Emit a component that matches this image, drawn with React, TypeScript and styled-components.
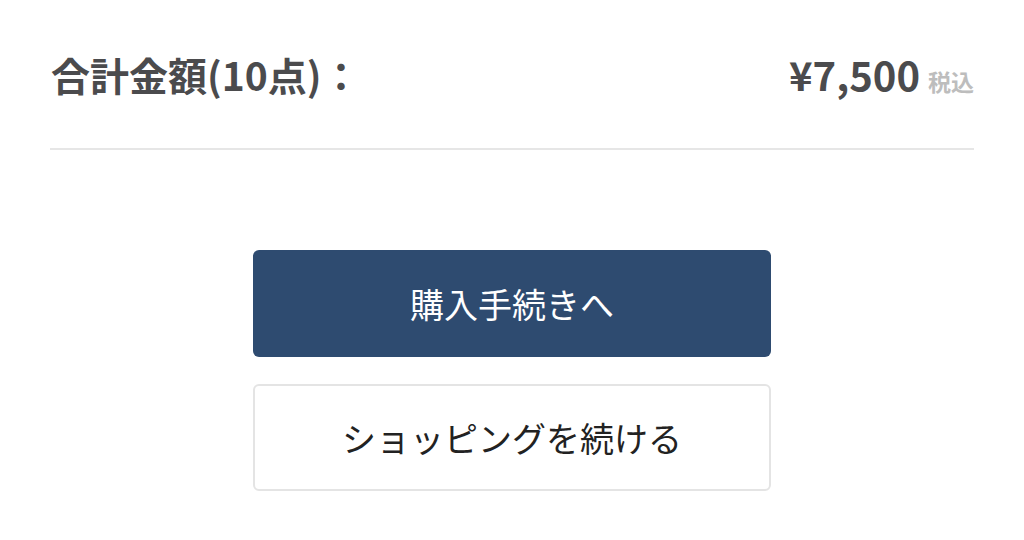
import styled, { createGlobalStyle } from 'styled-components';

const Global = createGlobalStyle`
  html, body {
    margin: 0;
    padding: 0;
    background: #fff;
  }
  body {
    font-family: "Noto Sans CJK JP", "Noto Sans", sans-serif;
  }
`;

const Page = styled.div`
  width: 1024px;
  height: 540px;
  box-sizing: border-box;
  padding: 0 50px;
  display: flex;
  flex-direction: column;
`;

const TotalRow = styled.div`
  display: flex;
  align-items: center;
  justify-content: space-between;
  height: 150px;
  padding: 0 0 0 1px;
  box-sizing: border-box;
  border-bottom: 2px solid #e6e6e6;
`;

const TotalLabel = styled.div`
  font-size: 39px;
  font-weight: 700;
  color: #4b4b4d;
  margin-top: -1px;
`;

const Price = styled.div`
  display: flex;
  align-items: baseline;
  gap: 8px;
  margin-top: -1px;
`;

const Amount = styled.span`
  font-size: 40px;
  font-weight: 700;
  color: #4b4b4d;
`;

const Tax = styled.span`
  font-size: 23px;
  font-weight: 700;
  color: #bdbdbd;
`;

const Actions = styled.div`
  display: flex;
  flex-direction: column;
  align-items: center;
  gap: 27px;
  padding-top: 100px;
`;

const Button = styled.button<{ primary?: boolean }>`
  width: 518px;
  height: 107px;
  box-sizing: border-box;
  border-radius: 6px;
  font-family: "Noto Sans CJK JP", sans-serif;
  font-size: 34px;
  font-weight: 400;
  cursor: pointer;
  background: ${p => (p.primary ? '#2e4b70' : '#fff')};
  color: ${p => (p.primary ? '#fff' : '#222')};
  border: ${p => (p.primary ? 'none' : '2px solid #e4e4e4')};
`;

export default function App() {
  return (
    <>
      <Global />
      <Page>
        <TotalRow>
          <TotalLabel>合計金額(10点)：</TotalLabel>
          <Price>
            <Amount>¥7,500</Amount>
            <Tax>税込</Tax>
          </Price>
        </TotalRow>
        <Actions>
          <Button primary>購入手続きへ</Button>
          <Button>ショッピングを続ける</Button>
        </Actions>
      </Page>
    </>
  );
}
